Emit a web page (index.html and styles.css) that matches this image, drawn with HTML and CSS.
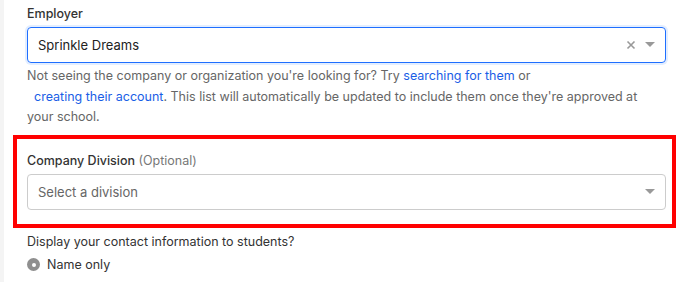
FILE: index.html
```html
<!DOCTYPE html>
<html lang="en">
<head>
    <meta charset="UTF-8">
    <meta name="viewport" content="width=device-width, initial-scale=1.0">
    <title>Employer</title>
    <link rel="stylesheet" href="styles.css">
</head>
<body>
    <div class="panel">
        <div class="field">
            <label class="label">Employer</label>
            <div class="select select-focused">
                <span class="value">Sprinkle Dreams</span>
                <span class="controls">
                    <svg class="clear" width="10" height="10" viewBox="0 0 10 10"><path d="M1.5 1.5 L8.5 8.5 M8.5 1.5 L1.5 8.5" stroke="#999" stroke-width="1.6" fill="none"/></svg>
                    <svg class="caret" width="10" height="6" viewBox="0 0 10 6"><path d="M0 0 H10 L5 5 Z" fill="#999"/></svg>
                </span>
            </div>
            <p class="help">Not seeing the company or organization you're looking for? Try <a href="#">searching for them</a> or<br><span class="indent"></span><a href="#">creating their account</a>. This list will automatically be updated to include them once they're approved at your school.</p>
        </div>

        <div class="field highlight">
            <label class="label">Company Division <span class="optional">(Optional)</span></label>
            <div class="select">
                <span class="placeholder">Select a division</span>
                <span class="controls">
                    <svg class="caret" width="10" height="6" viewBox="0 0 10 6"><path d="M0 0 H10 L5 5 Z" fill="#999"/></svg>
                </span>
            </div>
        </div>

        <div class="field">
            <div class="label-plain">Display your contact information to students?</div>
            <label class="radio">
                <span class="radio-dot"></span>
                Name only
            </label>
        </div>
    </div>
</body>
</html>
```

FILE: styles.css
```css
body {
    margin: 0;
    font-family: Inter, "Noto Sans", sans-serif;
    font-size: 12.5px;
    color: #333;
    background: #f4f4f4;
}
.panel {
    margin-left: 4px;
    background: #fff;
    min-height: 282px;
    padding: 4px 25px 0 23px;
}
.label {
    display: block;
    font-weight: 500;
    line-height: 20px;
    margin-bottom: 3px;
}
.optional {
    font-weight: 400;
    color: #777;
}
.select {
    height: 34px;
    border: 1px solid #ccc;
    border-radius: 4px;
    display: flex;
    align-items: center;
    padding: 0 10px;
    font-size: 13px;
}
.select-focused {
    border-color: #1f6fff;
    box-shadow: 0 0 0 2px #e3eeff;
}
.value {
    flex: 1;
    color: #222;
}
.placeholder {
    flex: 1;
    color: #666;
}
.controls {
    display: flex;
    align-items: center;
    gap: 9px;
}
.help {
    margin: 3px 0 0;
    color: #666;
    line-height: 20.5px;
}
.help a {
    color: #1a5ee6;
    text-decoration: none;
}
.indent {
    display: inline-block;
    width: 7px;
}
.highlight {
    margin: 7px -10px 0 -14px;
    border: 4px solid #ff0000;
    padding: 12px 6px 14px 10px;
}
.label-plain {
    margin-top: 4px;
    line-height: 20px;
}
.radio {
    display: flex;
    align-items: center;
    gap: 7px;
    margin-top: 3px;
    line-height: 20px;
}
.radio-dot {
    width: 13px;
    height: 13px;
    border-radius: 50%;
    background: #8f8f8f;
    position: relative;
}
.radio-dot::after {
    content: "";
    position: absolute;
    width: 4px;
    height: 4px;
    border-radius: 50%;
    background: #fff;
    left: 4.5px;
    top: 4.5px;
}
```
